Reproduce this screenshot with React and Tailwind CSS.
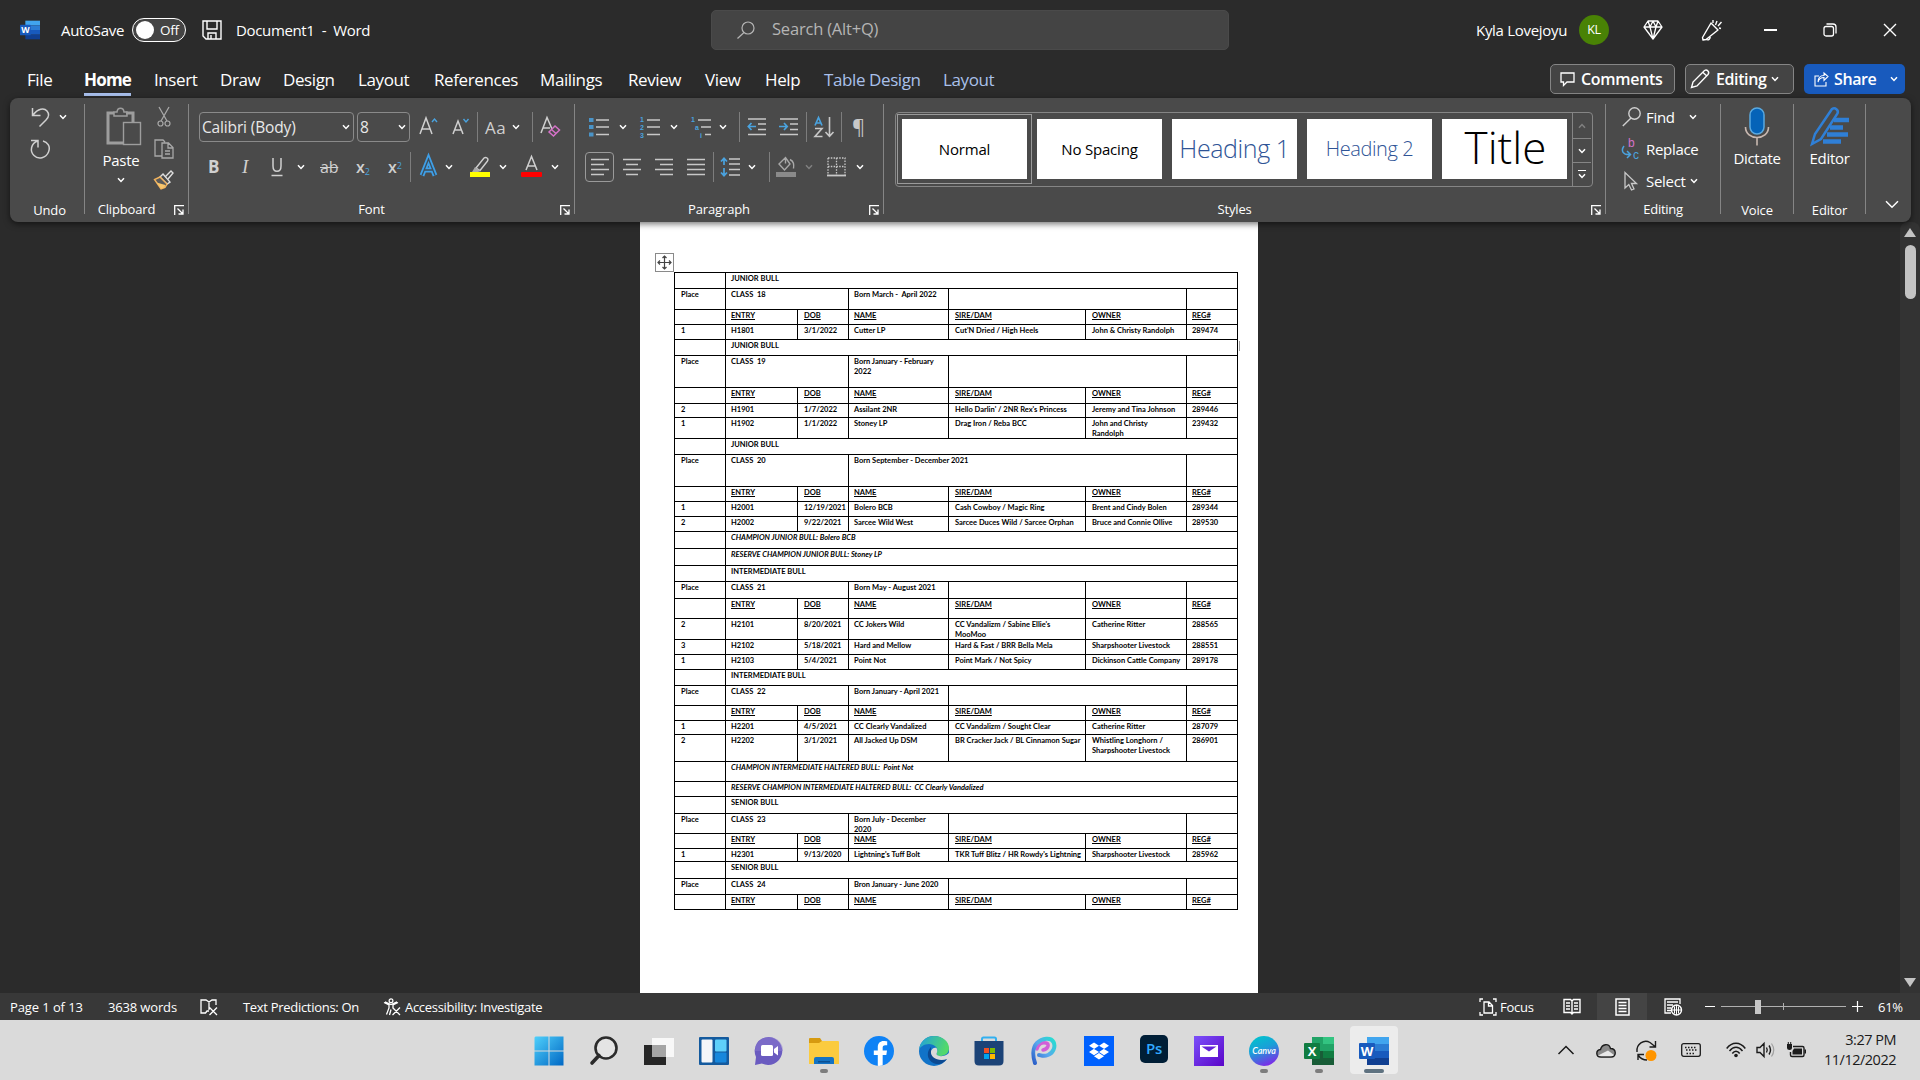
import React from "react";
import { FaDropbox, FaFacebookF } from "react-icons/fa";

const tabs = [
  { label: "File", cls: "w-[57px]" },
  { label: "Home", cls: "w-[70px]", active: true },
  { label: "Insert", cls: "w-[66px]" },
  { label: "Draw", cls: "w-[63px]" },
  { label: "Design", cls: "w-[75px]" },
  { label: "Layout", cls: "w-[76px]" },
  { label: "References", cls: "w-[106px]" },
  { label: "Mailings", cls: "w-[88px]" },
  { label: "Review", cls: "w-[77px]" },
  { label: "View", cls: "w-[60px]" },
  { label: "Help", cls: "w-[59px]" },
  { label: "Table Design", cls: "w-[119px]", context: true },
  { label: "Layout", cls: "w-[60px]", context: true },
];

// band = full width title, place = class row, head = column titles,
// entry = animal row, champ = champion line
const rows = [
  { type: "band", h: 16, text: "JUNIOR BULL" },
  { type: "place", h: 21, no: 18, born: "Born March -  April 2022" },
  { type: "head", h: 15 },
  { type: "entry", h: 15, cells: ["1", "H1801", "3/1/2022", "Cutter LP", "Cut'N Dried / High Heels", "John & Christy Randolph", "289474"] },
  { type: "band", h: 16, text: "JUNIOR BULL" },
  { type: "place", h: 32, no: 19, born: "Born January - February\n2022" },
  { type: "head", h: 16 },
  { type: "entry", h: 14, cells: ["2", "H1901", "1/7/2022", "Assilant 2NR", "Hello Darlin' / 2NR Rex's Princess", "Jeremy and Tina Johnson", "289446"] },
  { type: "entry", h: 21, cells: ["1", "H1902", "1/1/2022", "Stoney LP", "Drag Iron / Reba BCC", "John and Christy\nRandolph", "239432"] },
  { type: "band", h: 16, text: "JUNIOR BULL" },
  { type: "place", h: 32, no: 20, born: "Born September - December 2021", wide: true },
  { type: "head", h: 15 },
  { type: "entry", h: 15, cells: ["1", "H2001", "12/19/2021", "Bolero BCB", "Cash Cowboy / Magic Ring", "Brent and Cindy Bolen", "289344"] },
  { type: "entry", h: 15, cells: ["2", "H2002", "9/22/2021", "Sarcee Wild West", "Sarcee Duces Wild / Sarcee Orphan", "Bruce and Connie Ollive", "289530"] },
  { type: "champ", h: 17, text: "CHAMPION JUNIOR BULL: Bolero BCB" },
  { type: "champ", h: 17, text: "RESERVE CHAMPION JUNIOR BULL: Stoney LP" },
  { type: "band", h: 16, text: "INTERMEDIATE BULL" },
  { type: "place", h: 17, no: 21, born: "Born May - August 2021", split: true },
  { type: "head", h: 20 },
  { type: "entry", h: 21, cells: ["2", "H2101", "8/20/2021", "CC Jokers Wild", "CC Vandalizm / Sabine Ellie's\nMooMoo", "Catherine Ritter", "288565"] },
  { type: "entry", h: 15, cells: ["3", "H2102", "5/18/2021", "Hard and Mellow", "Hard & Fast / BRR Bella Mela", "Sharpshooter Livestock", "288551"] },
  { type: "entry", h: 15, cells: ["1", "H2103", "5/4/2021", "Point Not", "Point Mark / Not Spicy", "Dickinson Cattle Company", "289178"] },
  { type: "band", h: 16, text: "INTERMEDIATE BULL" },
  { type: "place", h: 20, no: 22, born: "Born January - April 2021" },
  { type: "head", h: 15 },
  { type: "entry", h: 14, cells: ["1", "H2201", "4/5/2021", "CC Clearly Vandalized", "CC Vandalizm / Sought Clear", "Catherine Ritter", "287079"] },
  { type: "entry", h: 27, cells: ["2", "H2202", "3/1/2021", "All Jacked Up DSM", "BR Cracker Jack / BL Cinnamon Sugar", "Whistling Longhorn /\nSharpshooter Livestock", "286901"] },
  { type: "champ", h: 20, text: "CHAMPION INTERMEDIATE HALTERED BULL:  Point Not" },
  { type: "champ", h: 15, text: "RESERVE CHAMPION INTERMEDIATE HALTERED BULL:  CC Clearly Vandalized" },
  { type: "band", h: 17, text: "SENIOR BULL" },
  { type: "place", h: 20, no: 23, born: "Born July - December\n2020" },
  { type: "head", h: 15 },
  { type: "entry", h: 13, cells: ["1", "H2301", "9/13/2020", "Lightning's Tuff Bolt", "TKR Tuff Blitz / HR Rowdy's Lightning", "Sharpshooter Livestock", "285962"] },
  { type: "band", h: 17, text: "SENIOR BULL" },
  { type: "place", h: 16, no: 24, born: "Bron January - June 2020" },
  { type: "head", h: 15 },
];

const headings = ["", "ENTRY", "DOB", "NAME", "SIRE/DAM", "OWNER", "REG#"];

const Svg = ({ w, h, className = "", children }) => (
  <svg
    width={w}
    height={h}
    viewBox={`0 0 ${w} ${h}`}
    fill="none"
    stroke="currentColor"
    className={`shrink-0 overflow-visible ${className}`}
  >
    {children}
  </svg>
);

const Chevron = ({ className = "" }) => (
  <Svg w={8} h={6} className={className}>
    <path d="M1 1.2 4 4.4 7 1.2" strokeWidth="1.5" />
  </Svg>
);

const Sep = ({ className = "" }) => (
  <div className={`h-[30px] w-px shrink-0 bg-[#7d7d7d] ${className}`} />
);

const GroupSep = () => <div className="mt-1.5 h-[110px] w-px shrink-0 bg-[#858585]" />;

const Launcher = () => (
  <Svg w={10} h={10} className="mr-1 text-white">
    <path d="M.7 10V.7H10M3.5 3.5 8.5 8.5M9 4.5V9H4.5" strokeWidth="1.3" />
  </Svg>
);

const GroupLabel = ({ children, launcher }) => (
  <div className="flex h-5 items-center">
    <span className={`flex-1 text-center ${launcher ? "pr-1.5" : ""}`}>{children}</span>
    {launcher && <Launcher />}
  </div>
);

const WordLogo = ({ size }) => (
  <svg width={size} height={size} viewBox="0 0 30 30" className="shrink-0">
    <rect x="8" y="1" width="22" height="7" fill="#41a5ee" />
    <rect x="8" y="8" width="22" height="7" fill="#2b7cd3" />
    <rect x="8" y="15" width="22" height="7" fill="#185abd" />
    <rect x="8" y="22" width="22" height="7" fill="#103f91" />
    <rect x="0" y="7" width="16" height="16" rx="1" fill="#185abd" />
    <text x="8" y="19.500" textAnchor="middle" fontSize="13" fontWeight="700" fill="#fff" fontFamily="Open Sans">
      W
    </text>
  </svg>
);

const TitleBar = () => (
  <div className="flex h-[60px] items-center pl-5 text-[15px] tracking-[-0.3px] text-white">
    <WordLogo size={20} />
    <span className="ml-[21px] w-[71px]">AutoSave</span>
    <div className="flex h-6 w-[54px] items-center rounded-full border border-white bg-[#444] pl-[3px]">
      <div className="size-[18px] rounded-full bg-white" />
      <span className="ml-1.5 text-[13.5px]">Off</span>
    </div>
    <Svg w={20} h={20} className="ml-4">
      <path d="M1 1H19V19H4L1 16ZM5 1V9H15V1M6 19V13H14V19M9 15V19" strokeWidth="1.4" />
    </Svg>
    <span className="ml-3.5 w-[475px] whitespace-pre tracking-[-0.35px]">Document1{"  -  "}Word</span>
    <div className="flex h-10 w-[518px] items-center rounded-[5px] border border-[#4a4a4a] bg-[#444] pl-[26px] text-[16.5px] tracking-[-0.2px] text-[#b5b5b5]">
      <Svg w={18} h={18} className="-ml-px">
        <circle cx="11" cy="7" r="6" strokeWidth="1.2" />
        <path d="M7 11.5 .5 17.5" strokeWidth="1.2" />
      </Svg>
      <span className="ml-[17px] pb-px">Search (Alt+Q)</span>
    </div>
    <span className="ml-[247px] w-[103px]">Kyla Lovejoyu</span>
    <div className="flex size-[30px] items-center justify-center rounded-full bg-[#498205] text-[12.5px]">
      KL
    </div>
    <Svg w={20} h={20} className="ml-[34px]">
      <path d="M5 1H15L19 7 10 19 1 7ZM1 7H19M5 1 7 7 10 19 13 7 15 1M7 7 10 1 13 7" strokeWidth="1.3" strokeLinejoin="round" />
    </Svg>
    <Svg w={22} h={22} className="ml-[38px]">
      <path d="M10 4 1.5 18.5 2 21 5 20.5 17 11ZM5 20C7 22 10 20 9 17M12 1V4M16 2 14.5 6M20.5 3 17 7M20 9.5 18 9" strokeWidth="1.4" strokeLinejoin="round" />
    </Svg>
    <div className="ml-[41px] h-[1.5px] w-[13px] bg-white" />
    <Svg w={14} h={14} className="ml-[46px]">
      <rect x="1" y="3.5" width="9.5" height="9.5" rx="2" strokeWidth="1.3" />
      <path d="M3.5 1H10Q13 1 13 4V10.5" strokeWidth="1.3" />
    </Svg>
    <Svg w={14} h={14} className="ml-[46px]">
      <path d="M1 1 13 13M13 1 1 13" strokeWidth="1.4" />
    </Svg>
  </div>
);

const TabRow = () => (
  <div className="flex h-[38px] pl-[27px] text-[17px] tracking-[-0.4px] text-white">
    {tabs.map((t, i) => (
      <div key={i} className={`shrink-0 pt-[7px] leading-[26px] ${t.cls}`}>
        <span
          className={
            t.active
              ? "inline-block h-[29px] border-b-[3px] border-[#a8bfec] font-bold tracking-[-0.8px]"
              : t.context
                ? "text-[#a9c0ea]"
                : ""
          }
        >
          {t.label}
        </span>
      </div>
    ))}
    <div className="ml-auto mr-[15px] mt-1 flex h-[30px] gap-2.5 text-[16px] font-semibold tracking-[-0.4px]">
      <div className="flex w-[125px] items-center rounded-[5px] border border-[#858585] bg-[#444] pl-[9px]">
        <Svg w={15} h={15}>
          <path d="M1 1H14V10H7L3.5 13.5V10H1Z" strokeWidth="1.3" />
        </Svg>
        <span className="ml-1.5 tracking-[-0.3px]">Comments</span>
      </div>
      <div className="flex w-[109px] items-center rounded-[5px] border border-[#858585] bg-[#444] pl-1">
        <Svg w={20} h={20}>
          <path d="M1.5 18.5 3 13 14.5 1.5C17 0 20 3 18 5.5L7 17ZM13 3.5 16.8 7" strokeWidth="1.4" />
        </Svg>
        <span className="ml-1.5">Editing</span>
        <Chevron className="ml-[5px]" />
      </div>
      <div className="flex w-[101px] items-center rounded-[5px] bg-[#185abd] pl-2.5">
        <Svg w={15} h={15}>
          <path d="M5 4H1V14H12V10M4 10C5 6.500 7 5.500 10 5.500V8.500L14 4.500 10 1V3.500C6 3.500 4 6 4 10Z" strokeWidth="1.1" />
        </Svg>
        <span className="ml-[5px]">Share</span>
        <Chevron className="ml-3.5" />
      </div>
    </div>
  </div>
);

const UndoGroup = () => (
  <div className="flex w-[74px] flex-col">
    <div className="mt-[9px] flex h-5 items-center pl-[21px] text-[#d0d0d0]">
      <Svg w={19} h={20}>
        <path d="M1.500 1V8.500H9.500M2 8C7 1.500 13 .5 16 4S18 10 15 13L8.500 19.500" strokeWidth="1.5" />
      </Svg>
      <Chevron className="ml-[9px] text-white" />
    </div>
    <div className="mt-3 flex h-5 pl-5 text-[#d0d0d0]">
      <Svg w={20} h={20}>
        <path d="M1 1.500H8V8.500M7.500 2C1 4.500-.5 12 4 16.500S16 19 18.500 13 17 3 13 2" strokeWidth="1.5" />
      </Svg>
    </div>
    <div className="mt-[42px] pl-[5px]">
      <GroupLabel>Undo</GroupLabel>
    </div>
  </div>
);

const ClipboardGroup = () => (
  <div className="flex w-[103px] flex-col">
    <div className="mt-[9px] flex h-[93px] pl-[13px]">
      <div className="flex w-[46px] flex-col items-center">
        <Svg w={36} h={40} className="ml-[5px] text-[#9d9d9d]">
          <path d="M17 36H2V6H8M20 6H27V15" strokeWidth="3" />
          <path d="M8 9V5H11C11.500 0 17.500 0 18 5H21V9Z" strokeWidth="1.5" />
          <rect x="17.500" y="15.500" width="17" height="22" strokeWidth="1.4" />
        </Svg>
        <span className="mt-[3px] text-[15px] leading-5 tracking-[-0.3px]">Paste</span>
        <Chevron className="mt-[7px]" />
      </div>
      <div className="ml-[9px] flex flex-col items-center text-[#a8a8a8]">
        <Svg w={14} h={20}>
          <path d="M2 0 10 14M12 0 4 14" strokeWidth="1.3" />
          <circle cx="3.500" cy="16.500" r="2.500" strokeWidth="1.2" />
          <circle cx="10.500" cy="16.500" r="2.500" strokeWidth="1.2" />
        </Svg>
        <Svg w={20} h={20} className="mt-3">
          <path d="M8 17H1V1H9L11 3M8 4H14.500L19 8.500V19H8ZM14 4V9H19M11 12H16M11 15H16" strokeWidth="1.3" />
        </Svg>
        <Svg w={22} h={20} className="mt-[11px]">
          <path d="M12 7 18 1 20 3 15 9" stroke="#ddd" strokeWidth="1.4" />
          <path d="M10 4 17 12 14 14 7 7Z" stroke="#ddd" strokeWidth="1.4" />
          <path d="M7 7 1.500 9.500 8 19 12 17.500 14 14Z" fill="#5a5a5a" stroke="#f2b35d" strokeWidth="1.4" />
          <path d="M3.500 12.500 12.500 15 11.500 17.500 8 18.500Z" fill="#f8c56c" stroke="none" />
        </Svg>
      </div>
    </div>
    <GroupLabel launcher>Clipboard</GroupLabel>
  </div>
);

const FontGroup = () => (
  <div className="flex w-[385px] flex-col">
    <div className="mt-3.5 flex h-[30px] items-center pl-2.5 text-[#d0d0d0]">
      <div className="flex h-[30px] w-[155px] items-center justify-between rounded-[4px] border border-[#8a8a8a] pl-0.5 pr-[3px] text-[15.5px] tracking-[-0.15px] text-[#e8e8e8]">
        <span className="pt-0.5">Calibri (Body)</span>
        <Chevron className="text-white" />
      </div>
      <div className="ml-[3px] flex h-[30px] w-[53px] items-center justify-between rounded-[4px] border border-[#8a8a8a] pl-0.5 pr-[3px] text-[15.5px] text-[#e8e8e8]">
        <span className="pt-0.5">8</span>
        <Chevron className="text-white" />
      </div>
      <Svg w={19} h={22} className="ml-[9px]">
        <path d="M1 18 7 2 13 18M3.200 13H10.800" strokeWidth="1.5" />
        <path d="M13 6 15.500 3 18 6" stroke="#4aa3df" strokeWidth="1.4" />
      </Svg>
      <Svg w={17} h={22} className="ml-3.5">
        <path d="M1 18 6 5 11 18M2.800 14H9.200" strokeWidth="1.5" />
        <path d="M11.500 3 14 6 16.500 3" stroke="#4aa3df" strokeWidth="1.4" />
      </Svg>
      <Sep className="ml-2" />
      <span className="ml-[7px] w-[22px] pt-px text-[17px] tracking-[0.5px]">Aa</span>
      <Chevron className="ml-[5px] text-white" />
      <Sep className="ml-3" />
      <Svg w={21} h={22} className="ml-[7px]">
        <path d="M1 17 7 1.500 12 13M3.200 12H10" strokeWidth="1.5" />
        <path d="M9 16 15 10 19.500 14 13.500 20ZM11.500 13.500 16 17.500" stroke="#d572c8" strokeWidth="1.5" />
      </Svg>
    </div>
    <div className="mt-[10px] flex h-[30px] items-center pl-[19px] text-[#d0d0d0]">
      <span className="w-2.5 text-[17px] font-bold">B</span>
      <span className="ml-6 w-2 font-['Liberation_Serif'] text-[19px] italic">I</span>
      <Svg w={12} h={20} className="ml-[21px]">
        <path d="M2 1V9C2 16 10 16 10 9V1M.5 18.500H11.500" strokeWidth="1.5" />
      </Svg>
      <Chevron className="ml-3.5 text-white" />
      <span className="ml-[15px] w-[19px] text-[16px] tracking-[-0.2px] line-through">ab</span>
      <span className="ml-[17px] w-3.5 text-[16px] font-semibold leading-5">
        x<sub className="text-[9px] font-normal text-[#4aa3df]">2</sub>
      </span>
      <span className="ml-[18px] w-3.5 text-[16px] font-semibold leading-5">
        x<sup className="text-[9px] font-normal text-[#4aa3df]">2</sup>
      </span>
      <Sep className="ml-2" />
      <Svg w={18} h={20} className="ml-[9px]">
        <path d="M2 18.500 8.500 2 15 18.500M4.500 13H12.500" stroke="#3fa0e8" strokeWidth="4.800" />
        <path d="M2 18.500 8.500 2 15 18.500M4.500 13H12.500" stroke="#3b4d5c" strokeWidth="1.300" />
      </Svg>
      <Chevron className="ml-[7px] text-white" />
      <Svg w={20} h={22} className="ml-[17px]">
        <path d="M6 12 14 2C16 .5 19 2.500 17.500 5L10 14.500Z" strokeWidth="1.400" />
        <path d="M5 11 10.500 15 8 16H2Z" fill="#aaa" stroke="none" />
        <rect y="16" width="20" height="5" fill="#ff0" stroke="none" />
      </Svg>
      <Chevron className="ml-[9px] text-white" />
      <Svg w={21} h={22} className="ml-[14px]">
        <path d="M5 14 10.500 .5 16 14M7 10H14" strokeWidth="1.500" />
        <rect y="16" width="21" height="5" rx="1" fill="#f00" stroke="none" />
      </Svg>
      <Chevron className="ml-[9px] text-white" />
    </div>
    <div className="mt-[18px]">
      <GroupLabel launcher>Font</GroupLabel>
    </div>
  </div>
);

const ParagraphGroup = () => (
  <div className="flex w-[308px] flex-col">
    <div className="mt-3.5 flex h-[30px] items-center pl-3.5 text-[#c8c8c8]">
      <Svg w={20} h={20}>
        <path d="M7 3H20M7 10H20M7 17.500H20" strokeWidth="1.700" />
        <path d="M0 3H4.500M0 10H4.500M0 17.500H4.500" stroke="#4a94c8" strokeWidth="4.200" />
      </Svg>
      <Chevron className="ml-2.5 text-white" />
      <Svg w={20} h={22} className="ml-[13px]">
        <path d="M7 4H20M7 11H20M7 18.500H20" strokeWidth="1.700" />
        <g fill="#4aa3df" stroke="none" fontSize="7" fontFamily="Liberation Sans" fontWeight="700">
          <text x="0" y="6">1</text>
          <text x="0" y="13.500">2</text>
          <text x="0" y="21.500">3</text>
        </g>
      </Svg>
      <Chevron className="ml-2.5 text-white" />
      <Svg w={20} h={22} className="ml-[13px]">
        <path d="M7 4H20M10 11H20M14 18.500H20" strokeWidth="1.700" />
        <g fill="#4aa3df" stroke="none" fontSize="7" fontFamily="Liberation Sans" fontWeight="700">
          <text x="0" y="6">1</text>
          <text x="4" y="13.500">a</text>
          <text x="9" y="21.500">i</text>
        </g>
      </Svg>
      <Chevron className="ml-2 text-white" />
      <Sep className="ml-3" />
      <Svg w={20} h={20} className="ml-[7px]">
        <path d="M1 2H19M11 7H19M11 12.500H19M1 17.500H19" strokeWidth="1.700" />
        <path d="M9 9.500H1.500M4.500 6 1.300 9.500 4.500 13" stroke="#4aa3df" strokeWidth="1.700" />
      </Svg>
      <Svg w={20} h={20} className="ml-3">
        <path d="M1 2H19M11 7H19M11 12.500H19M1 17.500H19" strokeWidth="1.700" />
        <path d="M0 9.500H8M5 6 8.200 9.500 5 13" stroke="#4aa3df" strokeWidth="1.700" />
      </Svg>
      <Sep className="ml-[7px]" />
      <Svg w={20} h={22} className="ml-[7px]">
        <path d="M1 9.500 4.500 1.500 8 9.500M2.200 7H6.800" stroke="#4aa3df" strokeWidth="1.700" />
        <path d="M1 12.500H8L1 20.500H8.500M15.500 1V20M11.500 16 15.500 20.300 19.500 16" strokeWidth="1.600" />
      </Svg>
      <Sep className="ml-[7px]" />
      <span className="ml-2.5 text-[20px] leading-5">¶</span>
    </div>
    <div className="mt-[10px] flex h-[30px] items-center pl-2.5 text-[#c8c8c8]">
      <div className="flex h-[30px] w-[29px] items-center justify-center rounded-[4px] border border-[#9a9a9a]">
        <Svg w={18} h={18}>
          <path d="M0 1.500H18M0 6.500H13M0 11.500H18M0 16.500H13" strokeWidth="1.700" />
        </Svg>
      </div>
      <Svg w={18} h={18} className="ml-[9px]">
        <path d="M0 1.500H18M3 6.500H15M0 11.500H18M3 16.500H15" strokeWidth="1.700" />
      </Svg>
      <Svg w={18} h={18} className="ml-3.5">
        <path d="M0 1.500H18M5 6.500H18M0 11.500H18M5 16.500H18" strokeWidth="1.700" />
      </Svg>
      <Svg w={18} h={18} className="ml-3.5">
        <path d="M0 1.500H18M0 6.500H18M0 11.500H18M0 16.500H18" strokeWidth="1.700" />
      </Svg>
      <Sep className="ml-2" />
      <Svg w={21} h={20} className="ml-1.5">
        <path d="M9 2H20M9 7H20M9 12.500H20M9 18H20" strokeWidth="1.700" />
        <path d="M4 1.500V8M1 4.500 4 1.300 7 4.500M4 11V18.500M1 15.500 4 18.700 7 15.500" stroke="#4aa3df" strokeWidth="1.700" />
      </Svg>
      <Chevron className="ml-[7px] text-white" />
      <Sep className="ml-[13px]" />
      <Svg w={20} h={22} className="ml-1.5 text-[#a8a8a8]">
        <path d="M3 8 9.500 1.500 14 8 8.500 14ZM9.500 1.500V7.500M14 3.500C18 5.500 18 8.500 17.500 12.500" strokeWidth="1.400" />
        <rect y="16" width="20" height="5" fill="#8a8a8a" stroke="none" />
      </Svg>
      <Chevron className="ml-[9px] text-[#808080]" />
      <Svg w={19} h={20} className="ml-3.5">
        <path d="M1 1H18V18M1 1V18M9.500 1V18M1 9.500H18" strokeWidth="1.300" strokeDasharray="1.500 1.300" />
        <path d="M0 18.500H19" strokeWidth="1.800" />
      </Svg>
      <Chevron className="ml-2.5 text-white" />
    </div>
    <div className="mt-[18px]">
      <GroupLabel launcher>Paragraph</GroupLabel>
    </div>
  </div>
);

const StylesGroup = () => (
  <div className="flex w-[721px] flex-col">
    <div className="ml-[11px] mt-3.5 flex h-[75px] w-[698px] rounded-[4px] border border-[#858585]">
      <div className="ml-px mt-px flex h-[70px] w-[135px] items-center justify-center border border-[#9a9a9a]">
        <div className="flex h-[60px] w-[125px] items-center justify-center bg-white text-[15px] tracking-[-0.2px] text-black">
          Normal
        </div>
      </div>
      <div className="ml-[5px] mt-1.5 flex gap-2.5">
        <div className="flex h-[60px] w-[125px] items-center justify-center bg-white text-[15px] tracking-[-0.2px] text-black">
          No Spacing
        </div>
        <div className="flex h-[60px] w-[125px] items-center justify-center bg-white text-[25px] font-light tracking-[-0.4px] text-[#2f5496]">
          Heading 1
        </div>
        <div className="flex h-[60px] w-[125px] items-center justify-center bg-white text-[20px] font-light tracking-[-0.4px] text-[#2f5496]">
          Heading 2
        </div>
        <div className="flex h-[60px] w-[125px] items-center justify-center bg-white pb-1 pl-0.5 text-[44px] font-light tracking-[0px] text-black">
          Title
        </div>
      </div>
      <div className="ml-[5px] flex w-[19px] flex-col border-l border-[#858585]">
        <div className="flex h-[25px] items-center justify-center text-[#808080]">
          <Chevron className="rotate-180" />
        </div>
        <div className="flex h-[25px] items-center justify-center border-y border-[#858585]">
          <Chevron />
        </div>
        <div className="flex h-[23px] flex-col items-center justify-center gap-0.5">
          <div className="h-[1.5px] w-2 bg-white" />
          <Chevron />
        </div>
      </div>
    </div>
    <div className="mt-[13px]">
      <GroupLabel launcher>Styles</GroupLabel>
    </div>
  </div>
);

const EditingGroup = () => (
  <div className="flex w-[114px] flex-col text-[15px] tracking-[-0.3px]">
    <div className="mt-2 flex h-[22px] items-center pl-4">
      <Svg w={19} h={20} className="text-[#d0d0d0]">
        <circle cx="12.500" cy="6.500" r="5.700" strokeWidth="1.400" />
        <path d="M9 11 .8 19" strokeWidth="1.400" />
      </Svg>
      <span className="ml-[5px] w-[43px]">Find</span>
      <Chevron />
    </div>
    <div className="mt-[10px] flex h-[22px] items-center pl-[15px]">
      <Svg w={19} h={22}>
        <path d="M3 8C-.5 13 2 17 9 16.500M6 13 9.500 16.500 6 20" stroke="#4aa3df" strokeWidth="1.500" />
        <text x="7" y="9" fill="#d572c8" stroke="none" fontSize="12" fontFamily="Liberation Sans">b</text>
        <text x="12" y="21" fill="#4aa3df" stroke="none" fontSize="12" fontFamily="Liberation Sans">c</text>
      </Svg>
      <span className="ml-1.5">Replace</span>
    </div>
    <div className="mt-[10px] flex h-[22px] items-center pl-[18px]">
      <Svg w={14} h={20} className="text-[#c8c8c8]">
        <path d="M1 1.500V17L4.800 13.500 7.500 19 10 18 7.500 12.500H12.500Z" strokeWidth="1.300" />
      </Svg>
      <span className="ml-2 w-11">Select</span>
      <Chevron />
    </div>
    <div className="mt-2 text-[13px]">
      <GroupLabel>Editing</GroupLabel>
    </div>
  </div>
);

const VoiceGroup = () => (
  <div className="flex w-[72px] flex-col items-center">
    <Svg w={26} h={40} className="mt-[9px]">
      <path d="M1.500 20C1.500 34 24.500 34 24.500 20M13 31V38.500" stroke="#c8b8b0" strokeWidth="1.600" />
      <rect x="6" y="1" width="14" height="26" rx="7" fill="#0563b8" stroke="#5aa9e0" strokeWidth="1.500" />
    </Svg>
    <span className="mt-px text-[15px] leading-5 tracking-[-0.3px]">Dictate</span>
    <div className="mt-[33px]">
      <GroupLabel>Voice</GroupLabel>
    </div>
  </div>
);

const EditorGroup = () => (
  <div className="flex w-[71px] flex-col items-center">
    <Svg w={40} h={40} className="mt-[9px] text-[#2f7fd6]">
      <path d="M2 37 5 27 22 2C25 0 29 3 27.500 6.500L11 32Z" strokeWidth="2.500" />
      <path d="M24 13H39M20 20.500H33M17 27.500H38M13 34.500H31" strokeWidth="4.500" />
    </Svg>
    <span className="mt-px text-[15px] leading-5 tracking-[-0.3px]">Editor</span>
    <div className="mt-[33px]">
      <GroupLabel>Editor</GroupLabel>
    </div>
  </div>
);

const Ribbon = () => (
  <div className="relative z-10 mx-2.5 mr-[9px] flex h-[124px] shrink-0 rounded-lg bg-[#4a4a4a] text-[13px] tracking-[-0.15px] text-white shadow-[0_2px_6px_rgba(0,0,0,0.55)]">
    <UndoGroup />
    <GroupSep />
    <ClipboardGroup />
    <GroupSep />
    <FontGroup />
    <GroupSep />
    <ParagraphGroup />
    <GroupSep />
    <StylesGroup />
    <GroupSep />
    <EditingGroup />
    <GroupSep />
    <VoiceGroup />
    <GroupSep />
    <EditorGroup />
    <GroupSep />
    <div className="flex flex-1 items-end justify-center pb-[13px] pl-1.5">
      <Svg w={14} h={9}>
        <path d="M1 1.200 7 7.200 13 1.200" strokeWidth="1.500" />
      </Svg>
    </div>
  </div>
);

const Cell = ({ children, wide, className = "" }) => (
  <div
    className={`whitespace-pre border-b border-r border-black pt-px ${wide ? "pl-1.5" : "pl-[5px]"} ${className}`}
  >
    {children}
  </div>
);

const TableRow = ({ row }) => {
  let cells;
  if (row.type === "band" || row.type === "champ") {
    cells = (
      <>
        <Cell />
        <Cell className={row.type === "champ" ? "col-span-6 italic" : "col-span-6"}>{row.text}</Cell>
      </>
    );
  } else if (row.type === "place") {
    cells = (
      <>
        <Cell wide>Place</Cell>
        <Cell className="col-span-2">{`CLASS  ${row.no}`}</Cell>
        <Cell className={row.wide ? "col-span-3" : ""}>{row.born}</Cell>
        {!row.wide && !row.split && <Cell className="col-span-2" />}
        {row.split && (
          <>
            <Cell />
            <Cell />
          </>
        )}
        <Cell />
      </>
    );
  } else {
    const values = row.type === "head" ? headings : row.cells;
    cells = values.map((v, i) => (
      <Cell
        key={i}
        wide={[0, 2, 4, 5].includes(i)}
        className={row.type === "head" ? "underline underline-offset-1" : ""}
      >
        {v}
      </Cell>
    ));
  }
  return (
    <div
      className="grid grid-cols-[51px_72px_51px_100px_137px_101px_51px] grid-rows-1"
      style={{ height: row.h }}
    >
      {cells}
    </div>
  );
};

const Page = () => (
  <div className="h-full w-[618px] shrink-0 bg-white pl-[15px] pt-[31px]">
    <div className="flex size-[19px] items-center justify-center border border-[#8a8a8a] bg-white">
      <Svg w={15} h={15} className="text-[#444]">
        <path d="M7.500 1V14M1 7.500H14M5.500 3 7.500 1 9.500 3M5.500 12 7.500 14 9.500 12M3 5.500 1 7.500 3 9.500M12 5.500 14 7.500 12 9.500" strokeWidth="1.200" />
      </Svg>
    </div>
    <div className="relative ml-[19px] w-[564px] border-l border-t border-black font-['Lato'] text-[7.500px] font-bold leading-[10px] text-black">
      {rows.map((row, i) => (
        <TableRow key={i} row={row} />
      ))}
      {/* end of row mark */}
      <div className="absolute -right-0.5 top-[68px] h-2.5 w-px bg-[#9a9a9a]" />
    </div>
  </div>
);

const Workspace = () => (
  <div className="flex h-[771px] shrink-0">
    <div className="flex flex-1 justify-center overflow-hidden pr-0.5">
      <Page />
    </div>
    <div className="flex w-5 shrink-0 flex-col items-center rounded-t-lg bg-[#333] pt-1.5">
      <Svg w={12} h={9}>
        <path d="M6 0 12 9H0Z" fill="#c4c4c4" stroke="none" />
      </Svg>
      <div className="mt-2 h-[54px] w-[11px] rounded-full bg-[#c4c4c4]" />
      <Svg w={12} h={9} className="mb-1.5 mt-auto">
        <path d="M0 0H12L6 9Z" fill="#c4c4c4" stroke="none" />
      </Svg>
    </div>
  </div>
);

const StatusBar = () => (
  <div className="flex h-[27px] shrink-0 items-center bg-[#383838] pl-2.5 text-[13px] tracking-[-0.25px] text-white">
    <span className="w-[98px] pt-0.5 tracking-[-0.1px]">Page 1 of 13</span>
    <span className="w-[92px] pt-0.5 tracking-[-0.15px]">3638 words</span>
    <Svg w={18} h={18}>
      <path d="M9 13H7L5.500 15H1V2H6L9 4 12 2H16V7M9 4V12M9.500 9.500 17 17M17 9.500 9.500 17" strokeWidth="1.300" />
    </Svg>
    <span className="ml-[25px] w-[140px] pt-0.5 tracking-[-0.3px]">Text Predictions: On</span>
    <Svg w={18} h={18}>
      <circle cx="8" cy="2.800" r="1.900" strokeWidth="1.200" />
      <path d="M1 4.500 6 7V10L3.500 16.500M15 4.500 10 7V10M8 11.500 6.500 17M9.500 9.500 17 17M17 9.500 9.500 17M2 3.800 8 6.500 14 3.800" strokeWidth="1.300" />
    </Svg>
    <span className="ml-1 pt-0.5 tracking-[-0.3px]">Accessibility: Investigate</span>
    <div className="ml-auto flex h-full items-center">
      <Svg w={18} h={18}>
        <path d="M4 1H1V4M1 14V17H4M14 17H17V14M14 1H17V4M5 4H10L13.500 7.500V15H5ZM9.500 4V8H13.500" strokeWidth="1.300" />
      </Svg>
      <span className="ml-[3px] w-[63px] pt-0.5">Focus</span>
      <Svg w={18} h={17}>
        <path d="M9 3 7.500 1.500H1V14.500H7.500L9 16 10.500 14.500H17V1.500H10.500ZM9 3V15M3 5H7M3 8H7M3 11H7M11 5H15M11 8H15M11 11H15" strokeWidth="1.400" />
      </Svg>
      <div className="ml-4 flex h-full w-[50px] items-center justify-center bg-[#444]">
        <Svg w={15} h={18}>
          <path d="M1 1H14V17H1ZM3.500 4.500H11.500M3.500 7.500H11.500M3.500 10.500H11.500M3.500 13.500H11.500" strokeWidth="1.500" />
        </Svg>
      </div>
      <Svg w={19} h={18} className="ml-[17px]">
        <path d="M7 15H1V1H16V6M3 4H14M3 7H9M3 10H7M3 12.500H7" strokeWidth="1.300" />
        <circle cx="12.500" cy="12" r="5" strokeWidth="1.400" />
        <path d="M7.500 12H17.500M12.500 7V17M10.500 8.500V15.500M14.500 8.500V15.500" strokeWidth="1" />
      </Svg>
      <div className="ml-[22px] h-px w-2.5 bg-white" />
      <div className="ml-1.5 flex w-[125px] items-center">
        <div className="h-px w-[34px] bg-[#b0b0b0]" />
        <div className="h-3.5 w-1.5 bg-[#c8c8c8]" />
        <div className="h-px w-[22px] bg-[#b0b0b0]" />
        <div className="h-[7px] w-px bg-[#b0b0b0]" />
        <div className="h-px flex-1 bg-[#b0b0b0]" />
      </div>
      <Svg w={11} h={11} className="ml-1.5">
        <path d="M0 5.500H11M5.500 0V11" strokeWidth="1.200" />
      </Svg>
      <span className="ml-[15px] w-[42px] pt-0.5">61%</span>
    </div>
  </div>
);

const TaskIcon = ({ children, running, active }) => (
  <div
    className={`flex h-12 w-12 flex-col items-center rounded-[4px] pt-[9px] ${active ? "bg-[#ececec]" : ""}`}
  >
    <div className="flex size-[31px] items-center justify-center">{children}</div>
    {running && <div className="mt-[3px] h-1 w-2 rounded-full bg-[#7d7d7d]" />}
    {active && <div className="mt-[3px] h-1 w-5 rounded-full bg-[#5f7280]" />}
  </div>
);

const Taskbar = () => (
  <div className="flex h-[60px] shrink-0 items-center bg-[#dadada] pl-[525px]">
    <div className="flex h-12 gap-[7px]">
      <TaskIcon>
        <svg width="30" height="30" viewBox="0 0 30 30">
          <defs>
            <linearGradient id="win" x1="0" y1="0" x2="1" y2="1">
              <stop offset="0" stopColor="#4fd0fb" />
              <stop offset="1" stopColor="#0067c4" />
            </linearGradient>
          </defs>
          <path d="M1.500.5H14.500V14.500H.5V1.500ZM15.500.5H29.500V14.500H15.500ZM.5 15.500H14.500V29.500H.5ZM15.500 15.500H29.500V29.500H15.500Z" fill="url(#win)" />
        </svg>
      </TaskIcon>
      <TaskIcon>
        <Svg w={28} h={30} className="text-[#2b2b2b]">
          <circle cx="16" cy="12" r="10.500" strokeWidth="2.600" fill="#e4e4e4" />
          <path d="M9 19.500 2 27" strokeWidth="3.600" strokeLinecap="round" />
        </Svg>
      </TaskIcon>
      <TaskIcon>
        <svg width="30" height="30" viewBox="0 0 30 30">
          <rect x="0" y="9" width="22" height="20" fill="#262626" />
          <rect x="8" y="2" width="22" height="19" fill="#fff" fillOpacity=".8" />
          <rect x="8" y="9" width="14" height="12" fill="#a5a5a5" />
        </svg>
      </TaskIcon>
      <TaskIcon>
        <svg width="30" height="28" viewBox="0 0 30 28">
          <rect width="30" height="28" rx="1" fill="#145a9e" />
          <rect x="2.500" y="2.500" width="11" height="23" rx="1" fill="#f4f6f9" />
          <rect x="16" y="2.500" width="11.500" height="12" rx="1" fill="#5fd0fa" />
          <rect x="16" y="15.500" width="11.500" height="10" rx="1" fill="#1787dc" />
        </svg>
      </TaskIcon>
      <TaskIcon>
        <svg width="30" height="30" viewBox="0 0 30 30">
          <path d="M15 1A14 14 0 1 1 8 27.500L1 29 2 21A14 14 0 0 1 15 1Z" fill="#6a5bc0" />
          <path d="M15 1A14 14 0 0 1 29 15H1A14 14 0 0 1 15 1Z" fill="#8b7bd0" fillOpacity=".5" />
          <rect x="7" y="9" width="12" height="11" rx="1.500" fill="#fff" />
          <path d="M20 13 24 10V19.500L20 16.500Z" fill="#fff" />
        </svg>
      </TaskIcon>
      <TaskIcon running>
        <svg width="30" height="28" viewBox="0 0 30 28">
          <path d="M0 2Q0 1 1 1H11L13 4V8H0Z" fill="#d69a10" />
          <path d="M0 6H10L13 4H29Q30 4 30 5V27H0Z" fill="#fbcb3f" />
          <path d="M5 27V22Q5 20 7 20H23Q25 20 25 22V27Z" fill="#1473c4" />
          <rect x="9" y="24" width="12" height="1.500" fill="#0b4f91" />
        </svg>
      </TaskIcon>
      <TaskIcon>
        <div className="flex size-[30px] items-end justify-center overflow-hidden rounded-full bg-[#0f82f5] pl-0.5">
          <FaFacebookF size={25} color="#fff" />
        </div>
      </TaskIcon>
      <TaskIcon>
        <svg width="30" height="30" viewBox="0 0 30 30">
          <defs>
            <linearGradient id="edge" x1="0" y1="0" x2="1" y2="0.3">
              <stop offset="0" stopColor="#1f9fe0" />
              <stop offset="1" stopColor="#52d96b" />
            </linearGradient>
          </defs>
          <circle cx="15" cy="15" r="15" fill="#1173c8" />
          <path d="M0 14C1 4 9 0 15 0 24 0 30 6 30 12 30 18 25 20 21 20 18 20 17 18 18 16 20 12 15 8 10 8 5 8 1 11 0 14Z" fill="url(#edge)" />
          <path d="M12 11C6 17 9 27 18 28 22 28.500 26 26 28 23 23 25.500 13 22 12 16Z" fill="#0c4a92" />
          <path d="M17.500 12C19 14 18 16 17.500 18 18 20.500 24 21 28 18.500L30 17V22L28 23C20 26 11 22 12 15 13 12 16 11 17.500 12Z" fill="#dadada" />
        </svg>
      </TaskIcon>
      <TaskIcon>
        <svg width="30" height="30" viewBox="0 0 30 30">
          <path d="M8 7V3Q8 1.500 9.500 1.500H20.500Q22 1.500 22 3V7" fill="none" stroke="#32b0f0" strokeWidth="2" />
          <path d="M.5 5H29.500V25Q29.500 29.500 25 29.500H5Q.5 29.500.5 25Z" fill="#1c4377" />
          <rect x="10" y="12" width="5" height="5" fill="#f25022" />
          <rect x="16" y="12" width="5" height="5" fill="#7fba00" />
          <rect x="10" y="18" width="5" height="5" fill="#00a4ef" />
          <rect x="16" y="18" width="5" height="5" fill="#ffb900" />
        </svg>
      </TaskIcon>
      <TaskIcon>
        <svg width="26" height="30" viewBox="0 0 26 30">
          <defs>
            <linearGradient id="paint" x1="0" y1="1" x2="1" y2="0">
              <stop offset="0" stopColor="#2b5fc8" />
              <stop offset=".5" stopColor="#5aa7ee" />
              <stop offset="1" stopColor="#23e0cf" />
            </linearGradient>
          </defs>
          <path d="M6 13C7 8 11 6 15 7S17 13 12 14" fill="none" stroke="#d05fd8" strokeWidth="3.500" strokeLinecap="round" />
          <path d="M4 27C2 21 1 12 6 7S20 1 22.500 6 22 17 17 19 10 19 8 19" fill="none" stroke="url(#paint)" strokeWidth="4" strokeLinecap="round" />
        </svg>
      </TaskIcon>
      <TaskIcon>
        <div className="flex size-[30px] items-center justify-center bg-[#0061fe]">
          <FaDropbox size={20} color="#fff" />
        </div>
      </TaskIcon>
      <TaskIcon>
        <div className="mb-1 flex size-7 items-center justify-center rounded-[5px] bg-[#001e36] text-[15px] font-semibold tracking-[-0.3px] text-[#31a8ff]">
          Ps
        </div>
      </TaskIcon>
      <TaskIcon>
        <svg width="30" height="30" viewBox="0 0 30 30">
          <defs>
            <linearGradient id="mail" x1="0" y1="0" x2="1" y2="1">
              <stop offset="0" stopColor="#7b50fa" />
              <stop offset="1" stopColor="#5a05c8" />
            </linearGradient>
          </defs>
          <rect width="30" height="30" fill="url(#mail)" />
          <rect x="6" y="9" width="18" height="12" fill="#fff" />
          <path d="M7.500 10.500H22.500L15 15.500Z" fill="#6423d8" />
        </svg>
      </TaskIcon>
      <TaskIcon running>
        <svg width="30" height="30" viewBox="0 0 30 30">
          <defs>
            <linearGradient id="canva" x1="0.200" y1="0" x2="0.600" y2="1">
              <stop offset="0" stopColor="#00c4cc" />
              <stop offset=".45" stopColor="#1a9fd8" />
              <stop offset="1" stopColor="#7d2ae8" />
            </linearGradient>
          </defs>
          <circle cx="15" cy="15" r="15" fill="url(#canva)" />
          <text x="15" y="17.500" textAnchor="middle" fontSize="9" fontStyle="italic" fontWeight="600" fill="#fff" fontFamily="Lato">
            Canva
          </text>
        </svg>
      </TaskIcon>
      <TaskIcon running>
        <svg width="30" height="30" viewBox="0 0 30 30">
          <rect x="8" y="1" width="11" height="14" fill="#21a366" />
          <rect x="19" y="1" width="11" height="7" fill="#33c481" />
          <rect x="19" y="8" width="11" height="7" fill="#21a366" />
          <rect x="8" y="15" width="11" height="14" fill="#185c37" />
          <rect x="19" y="15" width="11" height="7" fill="#107c41" />
          <rect x="19" y="22" width="11" height="7" fill="#185c37" />
          <rect x="0" y="7" width="16" height="16" rx="1" fill="#107c41" />
          <text x="8" y="19.500" textAnchor="middle" fontSize="13" fontWeight="700" fill="#fff" fontFamily="Open Sans">
            X
          </text>
        </svg>
      </TaskIcon>
      <TaskIcon active>
        <WordLogo size={30} />
      </TaskIcon>
    </div>
    <div className="ml-auto flex items-center pr-6 text-[#1b1b1b]">
      <Svg w={16} h={10}>
        <path d="M.5 9 8 1.500 15.500 9" strokeWidth="1.500" />
      </Svg>
      <Svg w={20} h={15} className="ml-[22px]">
        <path d="M5 14C-.5 14-.5 7 4.500 6.500 6 .5 13 0 14.500 5.500 20.500 5.500 21 14 15 14Z" fill="#8a8a8a" strokeWidth="1.400" />
        <path d="M2 12.500 12 7.500 18 12Q17 13.300 15 13.300H5Z" fill="#e8e8e8" stroke="none" />
      </Svg>
      <Svg w={21} h={21} className="ml-5">
        <path d="M1 12C0 4 8-1 14 2.500L19 6.500M19.500 1V7H13.500M2 20V14.500H8M2 15C4 18 7 20 11 20" strokeWidth="1.400" />
        <circle cx="15" cy="15.500" r="5.500" fill="#ff9500" stroke="none" />
      </Svg>
      <Svg w={20} h={14} className="ml-6">
        <rect x=".7" y=".7" width="18.600" height="12.600" rx="2" strokeWidth="1.300" />
        <path d="M4 4.500H16M5 7H16M5.500 10.500H14.500" strokeWidth="1.400" strokeDasharray="1.500 1.500" />
      </Svg>
      <Svg w={20} h={16} className="ml-[25px]">
        <path d="M.7 6.500C6-.5 14-.5 19.300 6.500M3.500 9C7.500 4 12.500 4 16.500 9M6.300 11.500C8.500 8.500 11.500 8.500 13.700 11.500" strokeWidth="1.500" />
        <circle cx="10" cy="13.500" r="1.800" fill="currentColor" stroke="none" />
      </Svg>
      <Svg w={19} h={16} className="ml-2.5">
        <path d="M1 5.500H4L8 1.500V14.500L4 10.500H1ZM10.500 5.500Q12 8 10.500 10.500M13 3.500Q16 8 13 12.500" strokeWidth="1.400" />
        <path d="M15.500 1.500Q20 8 15.500 14.500" stroke="#a0a0a0" strokeWidth="1.200" />
      </Svg>
      <Svg w={21} h={17} className="ml-[11px]">
        <path d="M7 4.500H16.500Q18 4.500 18 6V13Q18 14.500 16.500 14.500H6Q4.500 14.500 4.500 13V10" strokeWidth="1.400" />
        <path d="M8 6.500H16V12.500H6.500V9ZM1 2H6V6Q6 8 3.500 8T1 6ZM18.500 7.500H20V11.500H18.500ZM1.800 0H2.800V2H1.800ZM4.200 0H5.200V2H4.200Z" fill="currentColor" stroke="none" />
      </Svg>
      <div className="ml-4 w-[73px] text-right text-[14.500px] leading-5 tracking-[-0.5px]">
        <div>3:27 PM</div>
        <div>11/12/2022</div>
      </div>
    </div>
  </div>
);

const App = () => {
  return (
    <div className="flex h-[1080px] w-[1920px] flex-col overflow-hidden bg-[#2b2b2b] font-['Open_Sans','Noto_Sans',sans-serif]">
      <TitleBar />
      <TabRow />
      <Ribbon />
      <Workspace />
      <StatusBar />
      <Taskbar />
    </div>
  );
};

export default App;
